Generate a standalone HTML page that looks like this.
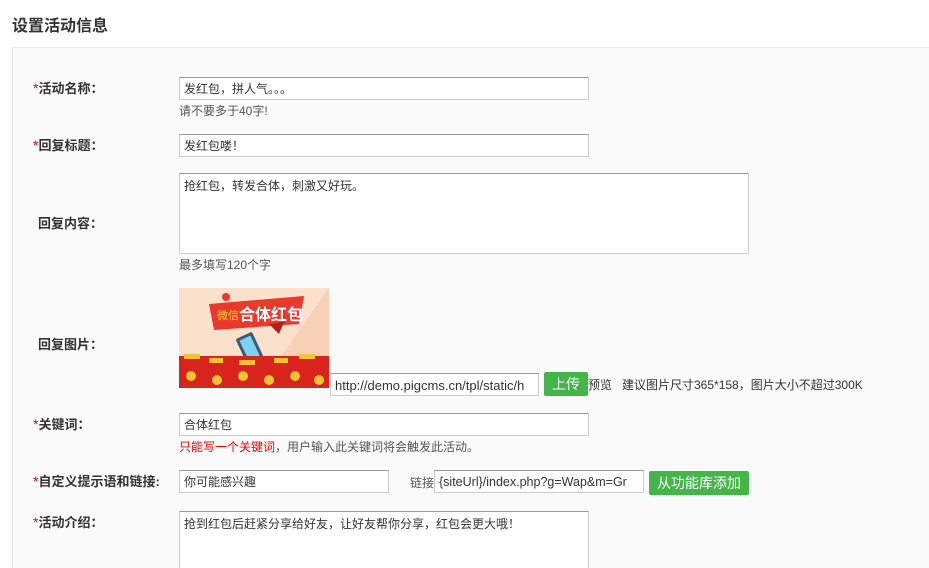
<!DOCTYPE html>
<html><head><meta charset="utf-8"><style>
*{margin:0;padding:0;box-sizing:border-box}
html,body{width:929px;height:568px;overflow:hidden}
body{background:#fff;font-family:"Liberation Sans","Noto Sans CJK SC",sans-serif;color:#333;position:relative;font-size:12px}
.a{position:absolute;white-space:nowrap}
.t{left:12px;top:12px;font-size:16px;font-weight:bold;color:#333}
.panel{left:12px;top:47px;width:930px;height:540px;background:#fafafa;border:1px solid #e8e8e8}
.lb{font-size:13px;font-weight:bold;color:#333;left:33px}
.lb b{color:#e00;font-weight:normal;font-size:14px}
.in{border:1px solid #ccc;border-top-color:#999;background:#fff;height:23px;line-height:23px;padding-left:4px;font-size:12px;color:#333;overflow:hidden}
.h{font-size:12px;color:#555}
.btn{background:#44b549;color:#fff;font-size:14px;text-align:center;border-radius:2px;height:24px;line-height:24px}
</style></head><body>
<div class="a t">设置活动信息</div>
<div class="a panel"></div>

<div class="a lb" style="top:78px"><b>*</b>活动名称：</div>
<div class="a in" style="left:179px;top:77px;width:410px">发红包，拼人气。。。</div>
<div class="a h" style="left:179px;top:102px">请不要多于40字!</div>

<div class="a lb" style="top:135px"><b>*</b>回复标题：</div>
<div class="a in" style="left:179px;top:134px;width:410px">发红包喽！</div>

<div class="a lb" style="top:213px;left:38px">回复内容：</div>
<div class="a in" style="left:179px;top:173px;width:570px;height:81px;line-height:20px;padding-top:2px">抢红包，转发合体，刺激又好玩。</div>
<div class="a h" style="left:179px;top:256px">最多填写120个字</div>

<div class="a lb" style="top:334px;left:38px">回复图片：</div>
<svg class="a" style="left:179px;top:288px" width="150" height="100" viewBox="0 0 150 100">
<rect width="150" height="100" fill="#fbe0cc"/>
<polygon points="150,0 150,100 80,100" fill="#f8d0b6"/>
<polygon points="30,16 125,8 120,36 35,42" fill="#e8392b"/>
<polygon points="90,36 105,34 100,46" fill="#b0221a"/>
<text x="38" y="31" font-size="11" fill="#ffd23a" font-family="Noto Sans CJK SC">微信</text>
<text x="60" y="32" font-size="16" font-weight="bold" fill="#fff" font-family="Noto Sans CJK SC">合体红包</text>
<circle cx="47" cy="9" r="4" fill="#e8392b"/>
<rect x="62" y="46" width="18" height="30" rx="2" transform="rotate(-25 71 61)" fill="#3a5a7a"/>
<rect x="65" y="49" width="12" height="22" transform="rotate(-25 71 61)" fill="#7fd0f0"/>
<rect x="0" y="68" width="150" height="32" fill="#d8241c"/>
<g fill="#f4c430"><rect x="5" y="66" width="16" height="5"/><rect x="30" y="70" width="14" height="5"/><rect x="60" y="72" width="16" height="5"/><rect x="95" y="70" width="14" height="5"/><rect x="120" y="66" width="16" height="5"/>
<circle cx="12" cy="88" r="5"/><circle cx="38" cy="92" r="5"/><circle cx="64" cy="88" r="5"/><circle cx="90" cy="92" r="5"/><circle cx="116" cy="88" r="5"/><circle cx="140" cy="92" r="5"/></g>
</svg>
<div class="a in" style="left:330px;top:373px;width:209px;font-size:13px;color:#333">http://demo.pigcms.cn/tpl/static/h</div>
<div class="a btn" style="left:544px;top:372px;width:44px">上传</div>
<div class="a h" style="left:588px;top:376px;color:#333">预览&nbsp;&nbsp;&nbsp;建议图片尺寸365*158，图片大小不超过300K</div>

<div class="a lb" style="top:414px"><b>*</b>关键词：</div>
<div class="a in" style="left:179px;top:413px;width:410px">合体红包</div>
<div class="a h" style="left:179px;top:438px"><span style="color:#e00">只能写一个关键词</span>，用户输入此关键词将会触发此活动。</div>

<div class="a lb" style="top:471px"><b>*</b>自定义提示语和链接:</div>
<div class="a in" style="left:179px;top:470px;width:210px">你可能感兴趣</div>
<div class="a h" style="left:410px;top:474px">链接</div>
<div class="a in" style="left:434px;top:470px;width:210px;font-size:12.5px">{siteUrl}/index.php?g=Wap&amp;m=Gr</div>
<div class="a btn" style="left:649px;top:471px;width:100px">从功能库添加</div>

<div class="a lb" style="top:512px"><b>*</b>活动介绍：</div>
<div class="a in" style="left:179px;top:511px;width:410px;height:70px;line-height:20px;padding-top:2px">抢到红包后赶紧分享给好友，让好友帮你分享，红包会更大哦！</div>
</body></html>
